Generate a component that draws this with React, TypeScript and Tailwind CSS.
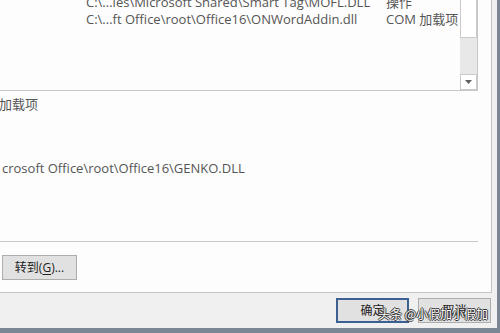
const font = "font-['Open_Sans','Noto_Sans_CJK_SC',sans-serif]"

const rows = [
  { path: 'C:\\...les\\Microsoft Shared\\Smart Tag\\MOFL.DLL', type: '操作' },
  { path: 'C:\\...ft Office\\root\\Office16\\ONWordAddin.dll', type: 'COM 加载项' },
]

function WinButton({ children, primary }: { children: React.ReactNode; primary?: boolean }) {
  return (
    <div
      className={
        'h-[25px] w-[73px] flex items-center justify-center bg-[#e1e1e1] text-[12px] text-[#222] ' +
        (primary ? 'border-2 border-[#3d6092]' : 'border border-[#adadad]')
      }
    >
      {children}
    </div>
  )
}

export default function App() {
  return (
    <div className={`relative w-[500px] h-[333px] overflow-hidden flex flex-col bg-[#7b8795] ${font}`}>
      <div className="flex h-[328px]">
        <div className="w-[497px] bg-[#f0f0f0] flex flex-col">
          {/* white panel */}
          <div className="w-[492px] h-[293px] bg-[#fdfdfd] border-r border-b border-[#c4c4c4] flex flex-col">
            {/* list box */}
            <div className="w-[478px] h-[91px] border-r border-b border-[#c8c8c8] flex shrink-0">
              <div className="flex-1 -mt-[6px] text-[13px] leading-[17px] text-[#555]">
                {rows.map((r) => (
                  <div key={r.path} className="flex whitespace-nowrap">
                    <div className="w-[386px] pl-[86px]">{r.path}</div>
                    <div>{r.type}</div>
                  </div>
                ))}
              </div>
              <div className="w-[17px] flex flex-col bg-[#e8e8e8]">
                <div className="h-[38px] bg-white border-x border-b border-[#c9c9c9]" />
                <div className="flex-1" />
                <div className="h-[16px] bg-white border border-[#c9c9c9] flex items-center justify-center">
                  <svg width="7" height="4" viewBox="0 0 7 4">
                    <path d="M0 0h7L3.5 4z" fill="#606060" />
                  </svg>
                </div>
              </div>
            </div>

            <div className="mt-[5px] -ml-[1px] text-[13px] leading-[17px] text-[#555]">加载项</div>
            <div className="mt-[47px] pl-[2px] text-[13px] leading-[17px] text-[#555] whitespace-nowrap">
              crosoft Office\root\Office16\GENKO.DLL
            </div>

            <div className="mt-[64px] w-[478px] h-px bg-[#c8c8c8]" />
            <div className="mt-[13px] ml-[2px] w-[75px] h-[25px] flex items-center justify-center bg-[#e1e1e1] border border-[#adadad] text-[12px] text-[#222]">
              转到(<span className="underline underline-offset-2">G</span>)...
            </div>
          </div>

          {/* dialog buttons */}
          <div className="mt-[5px] flex gap-[9px] pl-[336px]">
            <WinButton primary>确定</WinButton>
            <WinButton>取消</WinButton>
          </div>
        </div>
        <div className="flex-1" />
      </div>

      {/* watermark */}
      <div className="absolute left-[378px] top-[306px] text-[12px] leading-[16px] text-white whitespace-nowrap font-['Noto_Sans_CJK_SC',sans-serif] [text-shadow:1px_0_0_#333,-1px_0_0_#333,0_1px_0_#333,0_-1px_0_#333]">
        头条 @小假加小假加
      </div>
    </div>
  )
}
